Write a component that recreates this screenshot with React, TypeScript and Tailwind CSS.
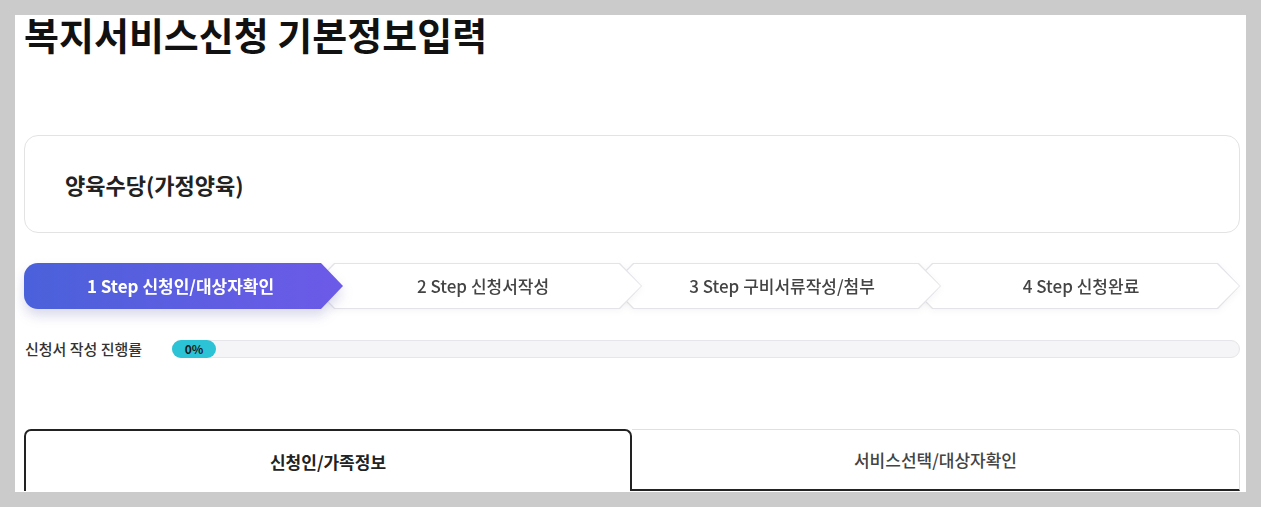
const FONT = "font-['Noto_Sans_CJK_KR',_'Noto_Sans',_sans-serif]";

const STEPS = [
  { no: 1, label: "신청인/대상자확인" },
  { no: 2, label: "신청서작성" },
  { no: 3, label: "구비서류작성/첨부" },
  { no: 4, label: "신청완료" },
];

const Z = ["z-40", "z-30", "z-20", "z-10"];

function StepBar() {
  return (
    <div className="flex h-[46px]">
      {STEPS.map((s, i) =>
        i === 0 ? (
          <div
            key={s.no}
            className={`relative ${Z[i]} w-[319px] shrink-0 [filter:drop-shadow(0_7px_6px_rgba(90,90,170,0.22))]`}
          >
            <div className="flex h-full items-center justify-center rounded-l-[14px] bg-gradient-to-r from-[#4a61da] to-[#6c5ae8] pr-[6px] text-[17px] font-bold text-white [clip-path:polygon(0_0,calc(100%-22px)_0,100%_50%,calc(100%-22px)_100%,0_100%)]">
              {s.no} Step {s.label}
            </div>
          </div>
        ) : (
          <div
            key={s.no}
            className={`relative ${Z[i]} -ml-[31px] w-[330px] shrink-0 [filter:drop-shadow(0_2px_3px_rgba(0,0,0,0.04))]`}
          >
            <div className="h-full bg-[#e3e3e8] [clip-path:polygon(0_50%,22px_0,calc(100%-22px)_0,100%_50%,calc(100%-22px)_100%,22px_100%)]">
              <div className="absolute inset-[1px] flex items-center justify-center bg-white pl-3 text-[17px] font-medium text-[#444] [clip-path:polygon(0_50%,22px_0,calc(100%-22px)_0,100%_50%,calc(100%-22px)_100%,22px_100%)]">
                {s.no} Step {s.label}
              </div>
            </div>
          </div>
        )
      )}
    </div>
  );
}

export default function App() {
  return (
    <div className={`h-[507px] w-[1261px] bg-[#cbcbcb] p-[15px] ${FONT}`}>
      <div className="h-full overflow-hidden bg-white pl-[9px] pr-[6px]">
        <h1 className="-mt-[5px] text-[38px] font-bold leading-[48px] text-[#111]">
          복지서비스신청 기본정보입력
        </h1>

        {/* service card */}
        <div className="mt-[77px] flex h-[98px] items-center rounded-[14px] border border-[#e3e3e3] pl-[40px]">
          <span className="text-[22px] font-bold text-[#222]">
            양육수당(가정양육)
          </span>
        </div>

        <div className="mt-[30px]">
          <StepBar />
        </div>

        {/* progress */}
        <div className="mt-[31px] flex items-center">
          <div className="w-[148px] shrink-0 pl-[1px] text-[15px] font-medium leading-[18px] text-[#333]">
            신청서 작성 진행률
          </div>
          <div className="h-[18px] flex-1 rounded-full border border-[#e6e6ea] bg-[#f5f5f7]">
            <div className="-mt-[1px] -ml-[1px] flex h-[18px] w-[44px] items-center justify-center rounded-full bg-[#2bc3d5] text-[12px] font-bold text-[#1a1a1a]">
              0%
            </div>
          </div>
        </div>

        {/* tabs */}
        <div className="mt-[71px] flex h-[62px]">
          <div className="flex w-1/2 items-center justify-center rounded-t-[7px] border-2 border-b-0 border-[#222] pt-[2px] text-[17px] font-bold text-[#222]">
            신청인/가족정보
          </div>
          <div className="flex w-1/2 items-center justify-center rounded-tr-[7px] border-t border-r border-b-2 border-t-[#e0e0e0] border-r-[#e0e0e0] border-b-[#222] text-[17px] font-medium text-[#444]">
            서비스선택/대상자확인
          </div>
        </div>
      </div>
    </div>
  );
}
